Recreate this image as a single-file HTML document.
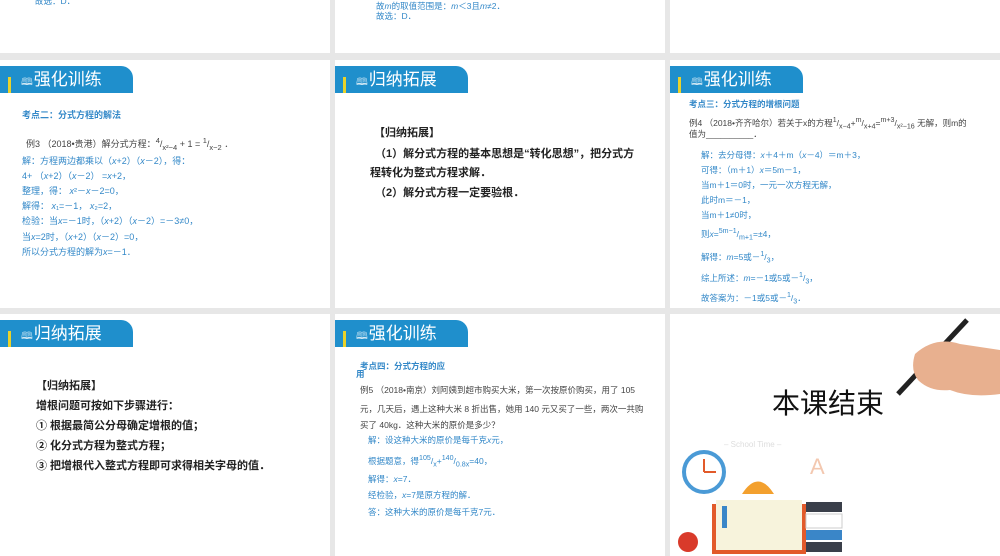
<!DOCTYPE html>
<html><head><meta charset="utf-8"><style>
*{margin:0;padding:0;box-sizing:border-box}
body{width:1000px;height:556px;background:#e7e7e7;position:relative;overflow:hidden;font-family:"Liberation Sans","Noto Sans CJK SC",sans-serif}
.s{position:absolute;background:#fff;overflow:hidden}
.t{position:absolute;white-space:nowrap;font-size:8.5px;color:#3388c8;line-height:1}
.k{color:#444}
.b{font-weight:bold}
.tab{position:absolute;left:0;top:6px;width:133px;height:27px;background:#1f8fcc;border-top-right-radius:12px}
.tab i{position:absolute;left:8px;top:11px;width:3px;height:16px;background:#e9d22a}
.tab span{position:absolute;left:21px;top:3px;color:#fff;font-size:17px;line-height:21px}
.tab em{font-style:normal;font-size:10px;opacity:.8;margin-right:1px}
.blk{font-size:11px;color:#222;font-weight:bold}
.c1 .t{font-size:9px}
</style></head><body>

<div class="s" style="left:0;top:0;width:330px;height:53px">
 <div class="t" style="left:35px;top:-3px">故选：D．</div>
</div>
<div class="s" style="left:335px;top:0;width:330px;height:53px">
 <div class="t" style="left:41px;top:2px">故<i>m</i>的取值范围是：<i>m</i>＜3且<i>m</i>≠2．</div>
 <div class="t" style="left:41px;top:12px">故选：D．</div>
</div>
<div class="s" style="left:670px;top:0;width:330px;height:53px"></div>

<!-- row 2 col 1 -->
<div class="s c1" style="left:0;top:60px;width:330px;height:248px">
 <div class="tab"><i></i><span><em>&#x1F56E;</em>强化训练</span></div>
 <div class="t b" style="left:22px;top:51px">考点二：分式方程的解法</div>
 <div class="t k" style="left:26px;top:77px">例3 （2018•贵港）解分式方程：<sup>4</sup>/<sub>x²−4</sub> + 1 = <sup>1</sup>/<sub>x−2</sub> ．</div>
 <div class="t" style="left:22px;top:97px">解：方程两边都乘以（<i>x</i>+2）（<i>x</i>－2），得：</div>
 <div class="t" style="left:22px;top:112px">4+ （<i>x</i>+2）（<i>x</i>－2） =<i>x</i>+2，</div>
 <div class="t" style="left:22px;top:127px">整理，得： <i>x</i>²－<i>x</i>－2=0，</div>
 <div class="t" style="left:22px;top:142px">解得： <i>x</i>₁=－1， <i>x</i>₂=2，</div>
 <div class="t" style="left:22px;top:157px">检验：当<i>x</i>=－1时，（<i>x</i>+2）（<i>x</i>－2）=－3≠0，</div>
 <div class="t" style="left:22px;top:173px">当<i>x</i>=2时，（<i>x</i>+2）（<i>x</i>－2）=0，</div>
 <div class="t" style="left:22px;top:188px">所以分式方程的解为<i>x</i>=－1．</div>
</div>

<!-- row 2 col 2 -->
<div class="s" style="left:335px;top:60px;width:330px;height:248px">
 <div class="tab"><i></i><span><em>&#x1F56E;</em>归纳拓展</span></div>
 <div class="t blk" style="left:39px;top:68px">【归纳拓展】</div>
 <div class="t blk" style="left:40px;top:89px">（1）解分式方程的基本思想是“转化思想”，把分式方</div>
 <div class="t blk" style="left:35px;top:108px">程转化为整式方程求解．</div>
 <div class="t blk" style="left:40px;top:128px">（2）解分式方程一定要验根．</div>
</div>

<!-- row 2 col 3 -->
<div class="s" style="left:670px;top:60px;width:330px;height:248px">
 <div class="tab"><i></i><span><em>&#x1F56E;</em>强化训练</span></div>
 <div class="t b" style="left:19px;top:40px">考点三：分式方程的增根问题</div>
 <div class="t k" style="left:19px;top:57px">例4 （2018•齐齐哈尔）若关于x的方程<sup>1</sup>/<sub>x−4</sub>+<sup>m</sup>/<sub>x+4</sub>=<sup>m+3</sup>/<sub>x²−16</sub> 无解，则m的</div>
 <div class="t k" style="left:19px;top:70px">值为__________．</div>
 <div class="t" style="left:31px;top:91px">解：去分母得：<i>x</i>＋4＋m（<i>x</i>－4）＝m＋3，</div>
 <div class="t" style="left:31px;top:106px">可得：（m＋1）<i>x</i>＝5m－1，</div>
 <div class="t" style="left:31px;top:121px">当m＋1＝0时，一元一次方程无解，</div>
 <div class="t" style="left:31px;top:136px">此时m＝－1，</div>
 <div class="t" style="left:31px;top:151px">当m＋1≠0时，</div>
 <div class="t" style="left:31px;top:168px">则<i>x</i>=<sup>5m−1</sup>/<sub>m+1</sub>=±4，</div>
 <div class="t" style="left:31px;top:191px">解得：<i>m</i>=5或－<sup>1</sup>/<sub>3</sub>，</div>
 <div class="t" style="left:31px;top:212px">综上所述：<i>m</i>=－1或5或－<sup>1</sup>/<sub>3</sub>，</div>
 <div class="t" style="left:31px;top:232px">故答案为：－1或5或－<sup>1</sup>/<sub>3</sub>．</div>
</div>

<!-- row 3 col 1 -->
<div class="s" style="left:0;top:314px;width:330px;height:242px">
 <div class="tab"><i></i><span><em>&#x1F56E;</em>归纳拓展</span></div>
 <div class="t blk" style="left:36px;top:67px">【归纳拓展】</div>
 <div class="t blk" style="left:36px;top:87px">增根问题可按如下步骤进行：</div>
 <div class="t blk" style="left:36px;top:107px">① 根据最简公分母确定增根的值；</div>
 <div class="t blk" style="left:36px;top:127px">② 化分式方程为整式方程；</div>
 <div class="t blk" style="left:36px;top:147px">③ 把增根代入整式方程即可求得相关字母的值．</div>
</div>

<!-- row 3 col 2 -->
<div class="s" style="left:335px;top:314px;width:330px;height:242px">
 <div class="tab"><i></i><span><em>&#x1F56E;</em>强化训练</span></div>
 <div class="t b" style="left:25px;top:48px">考点四：分式方程的应</div>
 <div class="t b" style="left:21px;top:56px">用</div>
 <div class="t k" style="left:25px;top:72px">例5 （2018•南京）刘阿姨到超市购买大米，第一次按原价购买，用了 105</div>
 <div class="t k" style="left:25px;top:91px">元，几天后，遇上这种大米 8 折出售，她用 140 元又买了一些，两次一共购</div>
 <div class="t k" style="left:25px;top:107px">买了 40kg．这种大米的原价是多少？</div>
 <div class="t" style="left:33px;top:122px">解：设这种大米的原价是每千克<i>x</i>元，</div>
 <div class="t" style="left:33px;top:141px">根据题意，得<sup>105</sup>/<sub>x</sub>+<sup>140</sup>/<sub>0.8x</sub>=40，</div>
 <div class="t" style="left:33px;top:161px">解得：<i>x</i>=7．</div>
 <div class="t" style="left:33px;top:177px">经检验，<i>x</i>=7是原方程的解．</div>
 <div class="t" style="left:33px;top:194px">答：这种大米的原价是每千克7元．</div>
</div>

<!-- row 3 col 3 -->
<div class="s" style="left:670px;top:314px;width:330px;height:242px">
 <div class="t" style="left:102px;top:76px;font-size:28px;color:#111">本课结束</div>
 <svg width="330" height="242" style="position:absolute;left:0;top:0">
  <line x1="297" y1="6" x2="228" y2="80" stroke="#222" stroke-width="5"/>
  <path d="M245 40 Q265 22 290 30 L330 36 L330 80 Q300 84 280 76 Q260 78 248 66 Q240 56 245 40Z" fill="#e8b08f"/>
  <text x="54" y="133" font-size="8" fill="#ddd" font-family="Liberation Sans">– School Time –</text>
  <text x="140" y="160" font-size="22" fill="#f3c8b0" font-family="Liberation Sans">A</text>
  <circle cx="34" cy="158" r="20" fill="#fff" stroke="#4a9ad6" stroke-width="4"/>
  <line x1="34" y1="158" x2="34" y2="145" stroke="#e25a2a" stroke-width="2"/>
  <line x1="34" y1="158" x2="46" y2="158" stroke="#e25a2a" stroke-width="2"/>
  <path d="M72 180 Q88 155 104 180Z" fill="#f3a02e"/>
  <rect x="42" y="190" width="94" height="50" fill="#e25a2a"/>
  <rect x="46" y="186" width="86" height="50" fill="#f7f3dc"/>
  <rect x="52" y="192" width="5" height="22" fill="#3a86c8"/>
  <rect x="136" y="188" width="36" height="10" fill="#3a3f4a"/>
  <rect x="136" y="200" width="36" height="14" fill="#fff" stroke="#ccc"/>
  <rect x="136" y="216" width="36" height="10" fill="#3a86c8"/>
  <rect x="136" y="228" width="36" height="10" fill="#3a3f4a"/>
  <circle cx="18" cy="228" r="10" fill="#d93a2a"/>
 </svg>
</div>
</body></html>
